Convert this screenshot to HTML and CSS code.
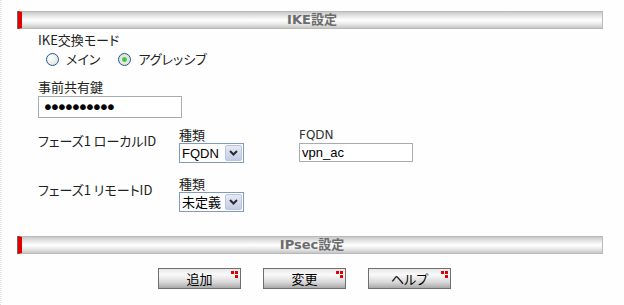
FILE: index.html
```html
<!DOCTYPE html>
<html lang="ja">
<head>
    <meta charset="UTF-8">
    <title>IKE設定</title>
    <link rel="stylesheet" href="styles.css">
</head>
<body>
    <div class="bar"><span>IKE設定</span></div>

    <div class="form">
        <div class="label">IKE交換モード</div>
        <div class="radios">
            <label class="radio"><input type="radio" name="mode"> メイン</label>
            <label class="radio"><input type="radio" name="mode" checked> アグレッシブ</label>
        </div>

        <div class="label psk-label">事前共有鍵</div>
        <input type="password" class="text psk" value="0123456789">

        <div class="phase">
            <div class="phase-name">フェーズ1 ローカルID</div>
            <div class="phase-col">
                <div class="label">種類</div>
                <div class="select">
                    <select><option>FQDN</option></select>
                    <span class="arrow"><svg width="9" height="6" viewBox="0 0 9 6"><path d="M1 1l3.5 3.5L8 1" fill="none" stroke="#2b2b2b" stroke-width="2"/></svg></span>
                </div>
            </div>
            <div class="phase-col">
                <div class="label latin">FQDN</div>
                <input type="text" class="text fqdn" value="vpn_ac">
            </div>
        </div>

        <div class="phase remote">
            <div class="phase-name">フェーズ1 リモートID</div>
            <div class="phase-col">
                <div class="label">種類</div>
                <div class="select">
                    <select><option>未定義</option></select>
                    <span class="arrow"><svg width="9" height="6" viewBox="0 0 9 6"><path d="M1 1l3.5 3.5L8 1" fill="none" stroke="#2b2b2b" stroke-width="2"/></svg></span>
                </div>
            </div>
        </div>
    </div>

    <div class="bar bar-ipsec"><span>IPsec設定</span></div>

    <div class="buttons">
        <a href="#" class="btn">追加</a>
        <a href="#" class="btn">変更</a>
        <a href="#" class="btn">ヘルプ</a>
    </div>
</body>
</html>
```

FILE: styles.css
```css
body{margin:0;padding-top:11px;min-height:294px;font:13px/16px "Noto Sans CJK JP",sans-serif;font-feature-settings:"palt";color:#222;background-color:#fdfefd;border-left:1px dotted #dcdcdc;}

/* section bars */
.bar{
    position:relative;
    width:580px;
    height:16px;
    margin-left:17px;
    border:1px solid #b9b9b9;
    border-left:4px solid #e00000;
    background:linear-gradient(#c9c9c9,#e6e6e6 25%,#fff 50%,#e9e9e9 75%,#c6c6c6);
    text-align:center;
    font:bold 13px/16px "DejaVu Sans","Noto Sans CJK JP",sans-serif;
    color:#6c6c6c;
}
.bar:before{content:"";position:absolute;left:-5px;top:-1px;bottom:-1px;width:1px;background:#6a6a6a;}
.bar-ipsec{margin-top:24px;}

.form{padding-left:37px;}
.label{line-height:16px;}
.latin{font:12px/16px "DejaVu Sans",sans-serif;color:#333;}
.form > .label:first-child{margin-top:3px;}

/* radios */
.radios{display:flex;gap:18px;margin:3px 0 0 8px;height:16px;}
.radio{display:flex;align-items:center;gap:7px;}
.radio input{
    -webkit-appearance:none;appearance:none;
    width:13px;height:13px;margin:0;
    border:1px solid #1d5a8e;border-radius:50%;
    background:radial-gradient(circle at 35% 35%,#fff,#dcdcd6);
    box-sizing:border-box;
}
.radio input:checked{background:radial-gradient(circle,#2ebb2e 0,#4fd04f 2px,#e8e8e2 3px,#dcdcd6);}

.psk-label{margin-top:12px;}
.text{
    display:block;margin:0;
    border:1px solid #a5acb2;
    background:#fff;
    font:13px "Liberation Sans",sans-serif;color:#000;
    box-sizing:border-box;outline:0 none;
}
.psk{width:144px;height:22px;padding:0 3px;margin-top:1px;font:20px "DejaVu Sans",sans-serif;letter-spacing:-4.8px;}

/* phase rows */
.phase{display:flex;margin-top:9px;}
.phase.remote{margin-top:13px;}
.phase-name{width:141px;padding-top:6px;}
.phase-col{width:120px;}
.fqdn{width:114px;height:19px;padding:0 2px;margin-top:0;}
.select{position:relative;width:65px;height:20px;}
.select select{
    -webkit-appearance:none;appearance:none;
    width:65px;height:20px;margin:0;padding:0 0 0 2px;
    border:1px solid #7f9db9;background:#fff;
    font:13px "Liberation Sans","Noto Sans CJK JP",sans-serif;color:#000;
}
.select .arrow{
    position:absolute;right:2px;top:2px;width:15px;height:14px;
    border:1px solid #b8c4e0;border-radius:2px;
    background:linear-gradient(#e6eaf7,#c3cce4);
    display:flex;align-items:center;justify-content:center;
}

/* buttons */
.buttons{display:flex;gap:22px;margin:14px 0 0 157px;}
.btn{
    position:relative;
    width:81px;height:19px;
    border:1px solid #6f6f6f;
    background:linear-gradient(#e8e8e8,#f9f9f9 30%,#d8d8d8 70%,#a9a9a9);
    color:#000;text-decoration:none;text-align:center;line-height:19px;
}
.btn:after{content:"";position:absolute;right:6px;top:2px;width:3px;height:3px;background:#e00000;box-shadow:4px 0 #e00000,4px 4px #e00000;}
```
